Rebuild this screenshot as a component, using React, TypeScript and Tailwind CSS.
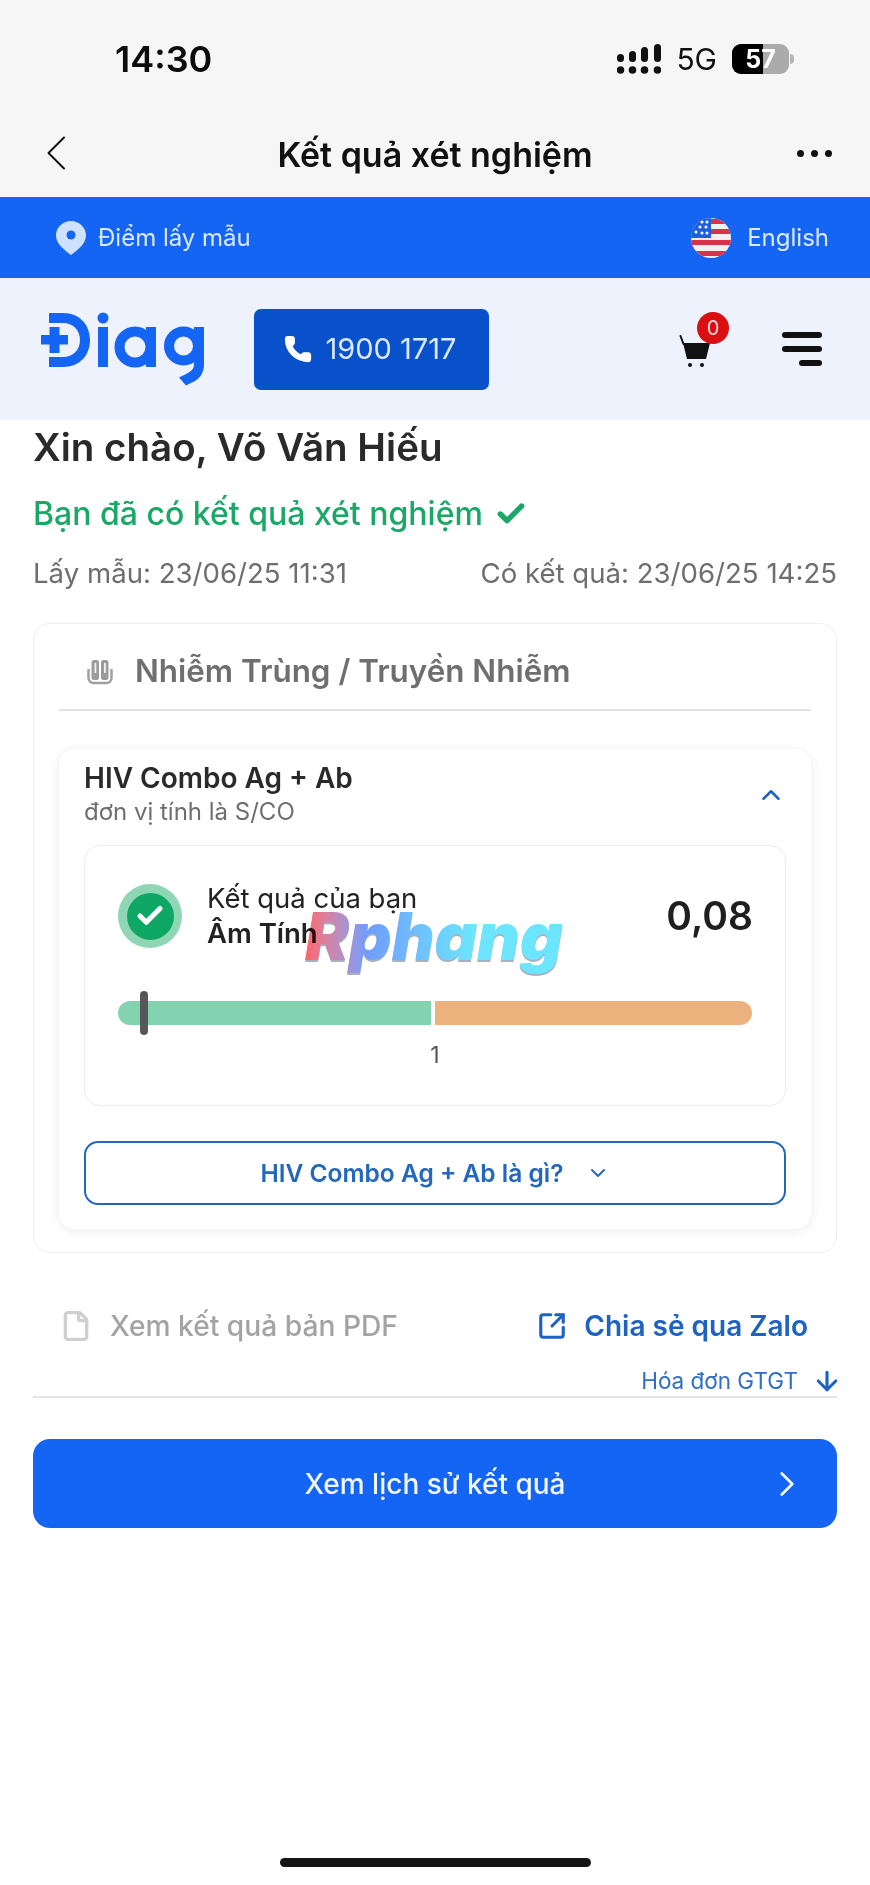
import { ChevronDown, ChevronRight, ChevronUp, ArrowDown, File, SquareArrowOutUpRight, Phone, Check } from "lucide-react";

function Signal() {
  return (
    <svg width="44" height="31" viewBox="0 0 44 31" className="block">
      <rect x="0" y="10" width="7" height="8" rx="3.5" fill="#111" />
      <rect x="12" y="7" width="7" height="11" rx="3.5" fill="#111" />
      <rect x="24" y="3" width="7" height="15" rx="3.5" fill="#111" />
      <rect x="37" y="0" width="7" height="18" rx="3.5" fill="#111" />
      <circle cx="3.5" cy="26" r="3.8" fill="#111" />
      <circle cx="15.5" cy="26" r="3.8" fill="#111" />
      <circle cx="27.5" cy="26" r="3.8" fill="#111" />
      <circle cx="40.5" cy="26" r="3.8" fill="#111" />
    </svg>
  );
}

function Battery() {
  return (
    <div className="flex items-center gap-[1px]">
      <div className="relative flex h-[30px] w-[57px] items-center justify-center overflow-hidden rounded-[9px] bg-[#ababab] text-[25px] leading-none font-bold text-white">
        <div className="absolute inset-y-0 left-0 w-[31px] bg-black" />
        <span className="relative">57</span>
      </div>
      <div className="h-[10px] w-[4px] rounded-r-full bg-[#b5b5b5]" />
    </div>
  );
}

function Flag() {
  return (
    <svg width="40" height="40" viewBox="0 0 40 40" className="block">
      <defs>
        <clipPath id="flagc">
          <circle cx="20" cy="20" r="20" />
        </clipPath>
      </defs>
      <g clipPath="url(#flagc)">
        <rect width="40" height="40" fill="#f2eef2" />
        <rect y="1" width="40" height="5" fill="#d8324a" />
        <rect y="11" width="40" height="5" fill="#d8324a" />
        <rect y="22" width="40" height="5" fill="#d8324a" />
        <rect y="33" width="40" height="5" fill="#d8324a" />
        <rect width="20" height="20" fill="#1f5fdc" />
        <g fill="#fff">
          <circle cx="5" cy="14" r="1.500" />
          <circle cx="11" cy="4" r="1.500" />
          <circle cx="16" cy="4" r="1.500" />
          <circle cx="9" cy="9" r="1.500" />
          <circle cx="15" cy="9" r="1.500" />
          <circle cx="11" cy="15" r="1.500" />
          <circle cx="16" cy="15" r="1.500" />
        </g>
      </g>
    </svg>
  );
}

function Pin() {
  return (
    <svg width="30" height="34" viewBox="0 0 30 34" className="block">
      <path d="M15 0C6.7 0 0 6.5 0 14.5 0 23 9 29.5 15 34c6-4.500 15-11 15-19.500C30 6.500 23.300 0 15 0z" fill="#cfe2fd" />
      <circle cx="15" cy="14" r="4.500" fill="#1565f5" />
    </svg>
  );
}

function Logo() {
  return (
    <svg width="166" height="74" viewBox="0 0 166 74" className="block" fill="none">
      <path d="M9 1h14c17 0 27 12 27 27S40 55 23 55H9V45h14c10 0 17-7 17-17S33 11 23 11H9z" fill="#1565f5" />
      <path d="M9.500 15h10v8h8.500v9.500h-8.500V41h-10v-8.500H1V23h8.500z" fill="#1565f5" />
      <circle cx="63" cy="6" r="5.500" fill="#1565f5" />
      <rect x="58" y="15" width="10" height="40" fill="#1565f5" />
      <circle cx="95" cy="35" r="15.500" stroke="#1565f5" strokeWidth="10" />
      <rect x="106" y="15" width="10" height="40" fill="#1565f5" />
      <circle cx="143.500" cy="34" r="14.500" stroke="#1565f5" strokeWidth="10" />
      <path d="M154 15h10v37c0 8-3 13-9 17l-9 4.500-7-8 8-4c5-2.500 7-5 7-9.500z" fill="#1565f5" />
    </svg>
  );
}

function Cart() {
  return (
    <svg width="32" height="34" viewBox="0 0 32 34" className="block">
      <path d="M1.500 2l3 8" stroke="#111" strokeWidth="2" strokeLinecap="round" fill="none" />
      <path d="M4 9h27l-4 16H8z" fill="#111" />
      <circle cx="11" cy="31" r="2" fill="#111" />
      <circle cx="23" cy="31" r="2" fill="#111" />
    </svg>
  );
}

function Tubes() {
  return (
    <svg width="26" height="26" viewBox="0 0 26 26" className="block" fill="none">
      <path d="M1.500 10v9a5 5 0 0 0 5 5h13a5 5 0 0 0 5-5v-9" stroke="#a0a0a0" strokeWidth="2.500" />
      <rect x="4.500" y="1" width="7.500" height="20" rx="2.500" fill="#9b9b9b" />
      <rect x="14" y="1" width="7.500" height="20" rx="2.500" fill="#9b9b9b" />
      <rect x="7.500" y="4" width="1.800" height="10" fill="#f2f2f2" />
      <rect x="17" y="4" width="1.800" height="10" fill="#f2f2f2" />
    </svg>
  );
}

export default function App() {
  return (
    <div className="flex h-[1885px] w-[870px] flex-col overflow-hidden bg-white font-['Inter',sans-serif] text-[#222]">
      <div className="flex h-[197px] flex-col bg-[#f6f6f6]">
        <div className="flex h-[118px] items-center justify-between pr-[76px] pl-[115px]">
          <span className="text-[36px] leading-none font-semibold text-[#0c0c0c]">14:30</span>
          <div className="flex items-center gap-[15px]">
            <Signal />
            <span className="text-[30px] leading-none font-normal text-[#111]">5G</span>
            <Battery />
          </div>
        </div>
        <div className="flex flex-1 items-start justify-between pr-[38px] pl-[46px]">
          <div className="w-[60px] pt-[18px]">
            <svg width="20" height="34" viewBox="0 0 20 34" className="block" fill="none">
              <path d="M18 1.500L2.500 17 18 32.500" stroke="#111" strokeWidth="2" strokeLinecap="round" strokeLinejoin="round" />
            </svg>
          </div>
          <span className="mt-[17px] text-[34px] leading-[40px] font-semibold text-[#111]">Kết quả xét nghiệm</span>
          <div className="mt-[32px] flex w-[68px] justify-end gap-[7px]">
            <span className="h-[7px] w-[7px] rounded-full bg-[#111]" />
            <span className="h-[7px] w-[7px] rounded-full bg-[#111]" />
            <span className="h-[7px] w-[7px] rounded-full bg-[#111]" />
          </div>
        </div>
      </div>

      <div className="flex h-[81px] items-center justify-between bg-[#1565f5] pr-[41px] pl-[56px] text-[24px] text-[#dce9ff]">
        <div className="flex items-center gap-[12px]">
          <Pin />
          <span>Điểm lấy mẫu</span>
        </div>
        <div className="flex items-center gap-[16px]">
          <Flag />
          <span>English</span>
        </div>
      </div>

      <div className="flex h-[142px] items-center bg-[#edf2fc] pr-[48px] pl-[40px]">
        <Logo />
        <div className="ml-[48px] flex h-[81px] w-[235px] items-center justify-center gap-[13px] rounded-[7px] bg-[#0950cb] pr-[4px] text-[29px] text-[#dce9ff]">
          <Phone className="h-[30px] w-[30px] fill-white text-white" strokeWidth={1} />
          <span>1900 1717</span>
        </div>
        <div className="relative mt-[4px] mr-[71px] ml-auto">
          <Cart />
          <span className="absolute -top-[22px] left-[18px] flex h-[32px] w-[32px] items-center justify-center rounded-full bg-[#d90f12] text-[20px] text-[#ffd9d9]">0</span>
        </div>
        <div className="flex w-[40px] flex-col items-end gap-[8px]">
          <span className="h-[6px] w-[40px] rounded-full bg-[#111]" />
          <span className="h-[6px] w-[40px] rounded-full bg-[#111]" />
          <span className="h-[6px] w-[23px] rounded-full bg-[#111]" />
        </div>
      </div>

      <div className="flex flex-1 flex-col px-[33px]">
        <h1 className="mt-[4px] text-[38.5px] leading-[46px] font-semibold text-[#2a2a2a]">Xin chào, Võ Văn Hiếu</h1>
        <div className="mt-[24px] flex items-center gap-[12px] text-[#1aa866]">
          <span className="text-[32px] leading-[40px] font-medium">Bạn đã có kết quả xét nghiệm</span>
          <Check className="h-[32px] w-[32px]" strokeWidth={4} />
        </div>
        <div className="mt-[21px] flex justify-between text-[27.6px] leading-[36px] text-[#6e6e6e]">
          <span>Lấy mẫu: 23/06/25 11:31</span>
          <span>Có kết quả: 23/06/25 14:25</span>
        </div>

        <div className="mt-[32px] h-[630px] rounded-[17px] border border-[#eeeeee] px-[25px]">
          <div className="flex h-[87px] items-center gap-[22px] border-b-2 border-[#e3e3e3] pt-[11px] pl-[28px]">
            <Tubes />
            <span className="text-[31.4px] font-semibold text-[#6f6f6f]">Nhiễm Trùng / Truyền Nhiễm</span>
          </div>
          <div className="mt-[38px] h-[480px] rounded-[16px] bg-white px-[25px] shadow-[0_2px_12px_rgba(0,0,0,0.08)]">
            <div className="flex h-[96px] items-center justify-between pb-[4px]">
              <div>
                <div className="text-[28px] leading-[32px] font-semibold text-[#2a2a2a]">HIV Combo Ag + Ab</div>
                <div className="mt-[2px] text-[24px] leading-[32px] text-[#6e6e6e]">đơn vị tính là S/CO</div>
              </div>
              <ChevronUp className="h-[30px] w-[30px] text-[#1d63c4]" strokeWidth={2} />
            </div>
            <div className="relative h-[261px] rounded-[16px] border border-[#ececec] px-[33px]">
              <div className="mb-[15px] flex h-[140px] items-center justify-between">
                <div className="flex items-center gap-[25px]">
                  <div className="flex h-[64px] w-[64px] items-center justify-center rounded-full bg-[#8fd6b4]">
                    <div className="flex h-[47px] w-[47px] items-center justify-center rounded-full bg-[#0fa765]">
                      <Check className="h-[30px] w-[30px] text-white" strokeWidth={4} />
                    </div>
                  </div>
                  <div>
                    <div className="text-[27.5px] leading-[35px] text-[#222]">Kết quả của bạn</div>
                    <div className="text-[27.5px] leading-[35px] font-semibold text-[#222]">Âm Tính</div>
                  </div>
                </div>
                <span className="mr-[-1px] text-[39px] font-semibold text-[#1f1f1f]">0,08</span>
              </div>
              <div className="relative flex h-[24px] gap-[4px]">
                <div className="w-[313px] rounded-l-full rounded-r-[3px] bg-[#83d3b0]" />
                <div className="flex-1 rounded-l-[3px] rounded-r-full bg-[#ecb27e]" />
                <div className="absolute -top-[10px] left-[22px] h-[44px] w-[8px] rounded-full bg-[#575757]" />
              </div>
              <div className="mt-[14px] text-center text-[23px] leading-[32px] text-[#555]">1</div>
              <span className="absolute top-[44px] left-[220px] z-10 bg-gradient-to-r from-[#ff6268] via-[#6f9cff] via-[24%] to-[#6ce5ff] to-[65%] bg-clip-text text-[66px] leading-[92px] font-black text-transparent italic mix-blend-multiply drop-shadow-[0_2px_0_rgba(80,100,130,0.5)]">Rphang</span>
            </div>
            <div className="mt-[35px] flex h-[64px] items-center justify-center gap-[22px] rounded-[14px] border-2 border-[#2467be] text-[24.5px] font-semibold text-[#2467be]">
              <span>HIV Combo Ag + Ab là gì?</span>
              <ChevronDown className="h-[24px] w-[24px]" strokeWidth={2} />
            </div>
          </div>
        </div>

        <div className="mt-[50px] flex items-center justify-between pr-[29px] pl-[27px]">
          <div className="flex items-center gap-[18px] text-[#a3a3a3]">
            <File className="h-[32px] w-[32px] text-[#cfcfcf]" strokeWidth={2.500} />
            <span className="text-[28.2px] leading-[46px] font-medium">Xem kết quả bản PDF</span>
          </div>
          <div className="flex items-center gap-[17px] text-[#1d63c4]">
            <SquareArrowOutUpRight className="h-[30px] w-[30px]" strokeWidth={2.500} />
            <span className="text-[28px] leading-[46px] font-semibold">Chia sẻ qua Zalo</span>
          </div>
        </div>
        <div className="flex h-[49px] items-center justify-end gap-[14px] border-b-2 border-[#e4e4e4] pt-[16px] text-[#2f6fc4]">
          <span className="text-[22.5px]">Hóa đơn GTGT</span>
          <ArrowDown className="mr-[-5px] h-[30px] w-[30px] text-[#1d63c4]" strokeWidth={2.500} />
        </div>

        <div className="relative mt-[41px] flex h-[89px] items-center justify-center rounded-[17px] bg-[#1565f5] text-[28px] font-medium text-[#f2f6ff]">
          <span>Xem lịch sử kết quả</span>
          <ChevronRight className="absolute right-[29px] h-[42px] w-[42px]" strokeWidth={1.600} />
        </div>

        <div className="mx-auto mt-[330px] h-[9px] w-[311px] rounded-full bg-[#141414]" />
      </div>
    </div>
  );
}
